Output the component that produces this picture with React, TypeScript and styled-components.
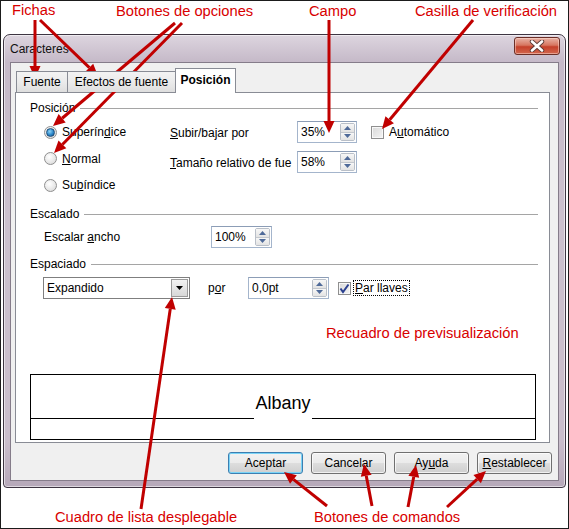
import styled, { createGlobalStyle, css } from "styled-components";

const GlobalStyle = createGlobalStyle`
  body { margin: 0; background: #fff; }
  * { box-sizing: border-box; }
`;

type Arrow = [number, number, number, number];

const ARROWS: Arrow[] = [
  [35, 20, 35, 78],
  [40, 20, 98, 76],
  [175, 23, 53, 126],
  [182, 23, 54, 153],
  [329, 20, 329, 133],
  [473, 20, 382, 129],
  [141, 509, 172, 297],
  [327, 506, 284, 472],
  [372, 506, 364, 464],
  [408, 507, 416, 465],
  [447, 507, 486, 471],
];

const CALLOUTS = [
  { x: 12, y: 2, text: "Fichas" },
  { x: 116, y: 3, text: "Botones de opciones" },
  { x: 309, y: 3, text: "Campo" },
  { x: 415, y: 3, text: "Casilla de verificación" },
  { x: 326, y: 325, text: "Recuadro de previsualización" },
  { x: 55, y: 509, text: "Cuadro de lista desplegable" },
  { x: 314, y: 509, text: "Botones de comandos" },
];

function headPoints([x1, y1, x2, y2]: Arrow) {
  const a = Math.atan2(y2 - y1, x2 - x1);
  const len = 12;
  const half = 5.5;
  const bx = x2 - len * Math.cos(a);
  const by = y2 - len * Math.sin(a);
  const px = -Math.sin(a) * half;
  const py = Math.cos(a) * half;
  return { bx, by, points: `${x2},${y2} ${bx + px},${by + py} ${bx - px},${by - py}` };
}

const Spin = () => (
  <SpinBox>
    <SpinHalf>
      <svg width="7" height="4" viewBox="0 0 7 4">
        <path d="M0 4 L3.5 0 L7 4 Z" fill="#4f6a99" />
      </svg>
    </SpinHalf>
    <SpinHalf>
      <svg width="7" height="4" viewBox="0 0 7 4">
        <path d="M0 0 L3.5 4 L7 0 Z" fill="#4f6a99" />
      </svg>
    </SpinHalf>
  </SpinBox>
);

const SpinField = ({ value, width }: { value: string; width: number }) => (
  <Field $width={width}>
    <FieldText>{value}</FieldText>
    <Spin />
  </Field>
);

const Check = ({ checked }: { checked?: boolean }) => (
  <CheckBox>
    {checked && (
      <svg width="11" height="11" viewBox="0 0 11 11">
        <path d="M1.5 5.5 L4 9 L9.5 1.5" stroke="#2a3f8f" strokeWidth="2" fill="none" />
      </svg>
    )}
  </CheckBox>
);

export default function App() {
  return (
    <>
      <GlobalStyle />
      <Page>
        <Window>
          <TitleBar>
            <Title>Caracteres</Title>
            <CloseButton>
              <svg width="16" height="12" viewBox="0 0 16 12">
                <path d="M3 1.5 L13 10.5 M13 1.5 L3 10.5" stroke="#5b3a36" strokeWidth="4.4" strokeLinecap="round" />
                <path d="M3 1.5 L13 10.5 M13 1.5 L3 10.5" stroke="#ffffff" strokeWidth="2.6" strokeLinecap="round" />
              </svg>
            </CloseButton>
          </TitleBar>
          <Client>
            <TabStrip>
              <Tab $width={52}>Fuente</Tab>
              <Tab $width={109}>Efectos de fuente</Tab>
              <Tab $width={61} $active>
                Posición
              </Tab>
            </TabStrip>
            <Panel>
              <SectionHead $top={7}>Posición</SectionHead>
              <PositionBody>
                <RadioColumn>
                  <OptionRow>
                    <Radio $checked />
                    <span>
                      Superín<Key>d</Key>ice
                    </span>
                  </OptionRow>
                  <OptionRow>
                    <Radio />
                    <span>
                      <Key>N</Key>ormal
                    </span>
                  </OptionRow>
                  <OptionRow>
                    <Radio />
                    <span>
                      Su<Key>b</Key>índice
                    </span>
                  </OptionRow>
                </RadioColumn>
                <OptionsGrid>
                  <FieldLabel>
                    <Key>S</Key>ubir/bajar por
                  </FieldLabel>
                  <SpinField value="35%" width={60} />
                  <AutoOption>
                    <Check />
                    <span>
                      A<Key>u</Key>tomático
                    </span>
                  </AutoOption>
                  <FieldLabel>
                    <Key>T</Key>amaño relativo de fue
                  </FieldLabel>
                  <SpinField value="58%" width={60} />
                </OptionsGrid>
              </PositionBody>

              <SectionHead $top={10}>Escalado</SectionHead>
              <ScaleRow>
                <ScaleLabel>
                  Escalar <Key>a</Key>ncho
                </ScaleLabel>
                <SpinField value="100%" width={61} />
              </ScaleRow>

              <SectionHead $top={8}>Espaciado</SectionHead>
              <SpacingRow>
                <Select>
                  <FieldText>Expandido</FieldText>
                  <SelectButton>
                    <svg width="7" height="4" viewBox="0 0 7 4">
                      <path d="M0 0 L3.5 4 L7 0 Z" fill="#000" />
                    </svg>
                  </SelectButton>
                </Select>
                <ByLabel>
                  p<Key>o</Key>r
                </ByLabel>
                <SpinField value="0,0pt" width={81} />
                <PairOption>
                  <Check checked />
                  <Focused>
                    <Key>P</Key>ar llaves
                  </Focused>
                </PairOption>
              </SpacingRow>

              <Preview>
                <PreviewLine>
                  <Rule />
                  <SampleText>Albany</SampleText>
                  <Rule />
                </PreviewLine>
              </Preview>
            </Panel>
            <ButtonRow>
              <DialogButton $default>Aceptar</DialogButton>
              <DialogButton>Cancelar</DialogButton>
              <DialogButton>
                Ay<Key>u</Key>da
              </DialogButton>
              <DialogButton>
                <Key>R</Key>establecer
              </DialogButton>
            </ButtonRow>
          </Client>
        </Window>

        <Overlay width="569" height="529" viewBox="0 0 569 529">
          {ARROWS.map((a, i) => {
            const { bx, by, points } = headPoints(a);
            return (
              <g key={i}>
                <line x1={a[0]} y1={a[1]} x2={bx} y2={by} stroke="#c00000" strokeWidth="3" />
                <polygon points={points} fill="#c00000" />
              </g>
            );
          })}
        </Overlay>
        {CALLOUTS.map((c) => (
          <Callout key={c.text} $x={c.x} $y={c.y}>
            {c.text}
          </Callout>
        ))}
      </Page>
    </>
  );
}

const Page = styled.div`
  position: relative;
  width: 569px;
  height: 529px;
  border: 1px solid #1b1b1b;
  background: #fff;
  overflow: hidden;
  padding: 33px 0 0 2px;
  font-family: "Liberation Sans", Arial, sans-serif;
`;

const Window = styled.div`
  width: 563px;
  height: 454px;
  display: flex;
  flex-direction: column;
  padding: 0 6px 6px 6px;
  border: 1px solid #3e3542;
  border-radius: 7px 7px 4px 4px;
  background: linear-gradient(
    180deg,
    #ddd5df 0%,
    #c5b9c8 6%,
    #cbc0cd 40%,
    #c9bdcb 90%,
    #b6a8b9 100%
  );
  box-shadow: inset 0 0 0 1px rgba(255, 255, 255, 0.55);
`;

const TitleBar = styled.div`
  height: 27px;
  display: flex;
  justify-content: space-between;
  align-items: flex-start;
`;

const Title = styled.div`
  margin-top: 7px;
  font-size: 12px;
  color: #111;
`;

const CloseButton = styled.div`
  width: 46px;
  height: 18px;
  margin: 2px -1px 0 0;
  display: flex;
  align-items: center;
  justify-content: center;
  border: 1px solid #6b2f27;
  border-radius: 3px;
  background: linear-gradient(180deg, #e8b3a6 0%, #d77660 45%, #c5402a 55%, #d2684f 100%);
  box-shadow: inset 0 0 0 1px rgba(255, 220, 210, 0.5);
`;

const Client = styled.div`
  flex: 1;
  display: flex;
  flex-direction: column;
  border: 1px solid #857c8a;
  background: #f0f0f0;
  padding: 5px 8px 6px 4px;
  font-size: 12px;
  color: #000;
`;

const TabStrip = styled.div`
  height: 24px;
  display: flex;
  align-items: flex-end;
  padding-left: 1px;
  position: relative;
  z-index: 1;
`;

const Tab = styled.div<{ $width: number; $active?: boolean }>`
  width: ${(p) => p.$width}px;
  height: 21px;
  display: flex;
  align-items: center;
  justify-content: center;
  border: 1px solid #898c95;
  border-bottom: none;
  margin-right: -1px;
  background: linear-gradient(180deg, #f3f3f3 0%, #ebebeb 50%, #dedede 100%);
  ${(p) =>
    p.$active &&
    css`
      height: 25px;
      margin-bottom: -1px;
      background: #fff;
      font-weight: bold;
      padding-bottom: 2px;
    `}
`;

const Panel = styled.div`
  height: 351px;
  border: 1px solid #898c95;
  background: #fff;
  padding: 0 13px 0 14px;
  display: flex;
  flex-direction: column;
`;

const SectionHead = styled.div<{ $top: number }>`
  height: 16px;
  margin-top: ${(p) => p.$top}px;
  margin-right: -2px;
  display: flex;
  align-items: center;
  gap: 5px;

  &::after {
    content: "";
    flex: 1;
    border-top: 1px solid #a5a5a5;
  }
`;

const Key = styled.span`
  text-decoration: underline;
`;

const PositionBody = styled.div`
  display: flex;
  margin-top: 5px;
  padding-left: 14px;
`;

const RadioColumn = styled.div`
  width: 126px;
  display: flex;
  flex-direction: column;
  gap: 4.5px;
`;

const OptionRow = styled.div`
  height: 22px;
  display: flex;
  align-items: center;
  gap: 5px;
`;

const AutoOption = styled(OptionRow)`
  margin-left: 14px;
`;

const Radio = styled.span<{ $checked?: boolean }>`
  width: 13px;
  height: 13px;
  border-radius: 50%;
  border: 1px solid #8f8f8f;
  background: radial-gradient(circle at 40% 35%, #ffffff 0%, #e6e6e6 60%, #d2d2d2 100%);
  display: flex;
  align-items: center;
  justify-content: center;

  ${(p) =>
    p.$checked &&
    css`
      &::after {
        content: "";
        width: 7px;
        height: 7px;
        border-radius: 50%;
        border: 1px solid #1d4d78;
        background: radial-gradient(circle at 40% 35%, #8fd3f6 0%, #2b87c9 55%, #16548f 100%);
      }
    `}
`;

const OptionsGrid = styled.div`
  display: grid;
  grid-template-columns: 127px 60px auto;
  grid-auto-rows: 22px;
  row-gap: 8px;
  align-items: center;
`;

const FieldLabel = styled.span`
  white-space: nowrap;
  padding-top: 1px;
`;

const Field = styled.div<{ $width: number }>`
  width: ${(p) => p.$width}px;
  height: 22px;
  display: flex;
  align-items: center;
  justify-content: space-between;
  border: 1px solid #a4b5cc;
  border-top-color: #8c9db6;
  background: #fff;
  padding: 0 1px 0 3px;
`;

const FieldText = styled.span`
  white-space: nowrap;
`;

const SpinBox = styled.div`
  width: 15px;
  height: 18px;
  display: flex;
  flex-direction: column;
  border: 1px solid #b9bfc8;
  border-radius: 2px;
`;

const SpinHalf = styled.div`
  flex: 1;
  display: flex;
  align-items: center;
  justify-content: center;
  background: linear-gradient(180deg, #f7f7f7 0%, #e3e3e3 100%);

  & + & {
    border-top: 1px solid #c4c8ce;
  }
`;

const CheckBox = styled.span`
  width: 13px;
  height: 13px;
  border: 1px solid #8f8f8f;
  background: linear-gradient(135deg, #d9d9d9 0%, #f4f4f4 100%);
  box-shadow: inset 0 0 0 1px #f8f8f8;
  display: flex;
  align-items: center;
  justify-content: center;
`;

const ScaleRow = styled.div`
  display: flex;
  align-items: center;
  margin-top: 4px;
  padding-left: 14px;
`;

const ScaleLabel = styled.span`
  width: 167px;
`;

const SpacingRow = styled.div`
  display: flex;
  align-items: center;
  margin-top: 5px;
  padding-left: 13px;
`;

const Select = styled.div`
  width: 147px;
  height: 22px;
  display: flex;
  align-items: center;
  justify-content: space-between;
  border: 1px solid #7f7f7f;
  background: #fff;
  padding: 0 1px 0 3px;
`;

const SelectButton = styled.div`
  width: 17px;
  height: 18px;
  display: flex;
  align-items: center;
  justify-content: center;
  border: 1px solid #9a9a9a;
  background: linear-gradient(180deg, #f2f2f2 0%, #d8d8d8 100%);
`;

const ByLabel = styled.span`
  width: 40px;
  margin-left: 18px;
`;

const PairOption = styled.div`
  display: flex;
  align-items: center;
  gap: 3px;
  margin-left: 9px;
`;

const Focused = styled.span`
  outline: 1px dotted #000;
  padding: 0 1px;
  line-height: 14px;
`;

const Preview = styled.div`
  height: 66px;
  margin-top: 75px;
  border: 1px solid #000;
`;

const PreviewLine = styled.div`
  height: 44px;
  display: flex;
  align-items: flex-end;
`;

const Rule = styled.div`
  flex: 1;
  border-bottom: 1px solid #000;
`;

const SampleText = styled.span`
  font-size: 18px;
  line-height: 20px;
  margin: 0 1px 6px;
`;

const ButtonRow = styled.div`
  height: 22px;
  margin-top: 9px;
  margin-right: -2px;
  display: flex;
  justify-content: flex-end;
  gap: 8px;
`;

const DialogButton = styled.div<{ $default?: boolean }>`
  width: 75px;
  height: 22px;
  display: flex;
  align-items: center;
  justify-content: center;
  border: 1px solid #707070;
  border-radius: 3px;
  background: linear-gradient(180deg, #f2f2f2 0%, #ebebeb 48%, #dddddd 52%, #cfcfcf 100%);
  box-shadow: inset 0 0 0 1px rgba(255, 255, 255, 0.7);

  ${(p) =>
    p.$default &&
    css`
      border-color: #3c7fb1;
      box-shadow: inset 0 0 0 1px #7ad4f7;
    `}
`;

const Overlay = styled.svg`
  position: absolute;
  left: -1px;
  top: -1px;
  pointer-events: none;
`;

const Callout = styled.span<{ $x: number; $y: number }>`
  position: absolute;
  left: ${(p) => p.$x - 1}px;
  top: ${(p) => p.$y - 1}px;
  font-family: "Liberation Sans", Arial, sans-serif;
  font-size: 14.7px;
  line-height: 17px;
  color: #d80000;
  white-space: nowrap;
`;
